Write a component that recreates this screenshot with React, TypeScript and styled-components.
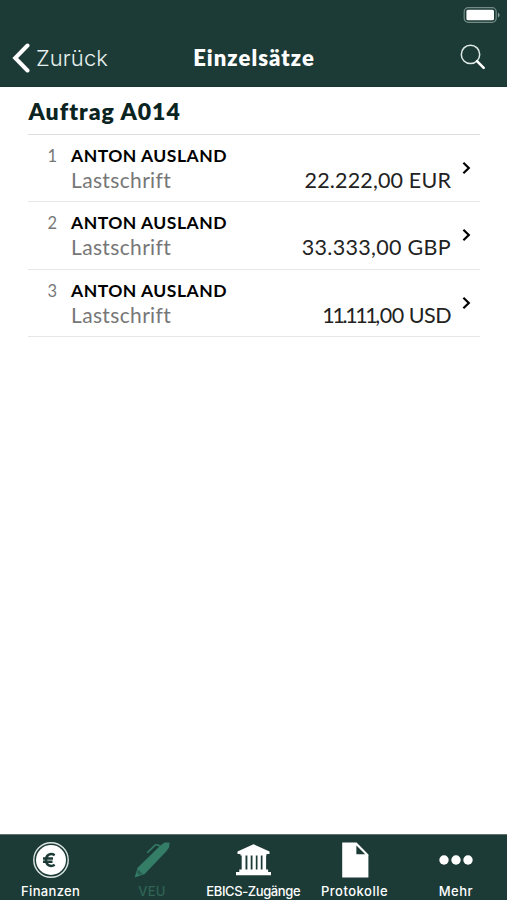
import React from "react";
import styled, { createGlobalStyle } from "styled-components";

const GlobalStyle = createGlobalStyle`
  * { box-sizing: border-box; }
  html, body { margin: 0; padding: 0; background: #fff; }
`;

const Screen = styled.div`
  width: 507px;
  height: 900px;
  display: flex;
  flex-direction: column;
  overflow: hidden;
  background: #fff;
  font-family: Lato, sans-serif;
`;

const Header = styled.header`
  height: 87px;
  flex: none;
  background: #1c3b37;
  border-bottom: 1px solid #173631;
  color: #fff;
`;

const StatusBar = styled.div`
  height: 29px;
  display: flex;
  justify-content: flex-end;
  padding: 7px 6px 0 0;
`;

const NavBar = styled.div`
  height: 57px;
  display: grid;
  grid-template-columns: 180px 1fr 180px;
  align-items: center;
`;

const BackButton = styled.button`
  display: flex;
  align-items: center;
  gap: 6px;
  height: 57px;
  padding: 0 0 0 12px;
  border: 0;
  background: none;
  color: #e6efed;
  font: 300 22px/30px Inter, sans-serif;
  letter-spacing: 0.1px;
`;

const NavTitle = styled.h1`
  margin: 0 -1px 0 0;
  text-align: center;
  font-size: 22px;
  line-height: 30px;
  font-weight: 800;
  letter-spacing: 1.05px;
  white-space: nowrap;
`;

const SearchButton = styled.button`
  justify-self: end;
  display: flex;
  margin: 0 21px 2px 0;
  padding: 0;
  border: 0;
  background: none;
`;

const Content = styled.main`
  flex: 1;
  padding: 0 27px 0 28px;
`;

const OrderTitle = styled.h2`
  margin: 0;
  height: 48px;
  padding-left: 0.5px;
  border-bottom: 1px solid #dedede;
  color: #0b241f;
  font-size: 23px;
  line-height: 48px;
  font-weight: 800;
  letter-spacing: 1px;
`;

const List = styled.ul`
  list-style: none;
  margin: 0;
  padding: 0;
`;

const Row = styled.li`
  height: 67.3px;
  display: grid;
  grid-template-columns: 29px 1fr 9px;
  column-gap: 14px;
  padding-right: 9px;
  border-bottom: 1px solid #e7e7e7;
`;

const Index = styled.span`
  padding-top: 9px;
  text-align: right;
  color: #777;
  font-size: 16.5px;
  line-height: 25px;
`;

const Details = styled.div`
  display: flex;
  flex-direction: column;
  padding-top: 9px;
`;

const Name = styled.div`
  color: #000;
  font-size: 17.5px;
  line-height: 24px;
  font-weight: 700;
  letter-spacing: 0.5px;
`;

const Line = styled.div`
  display: flex;
  align-items: baseline;
  justify-content: space-between;
  margin-right: -3px;
  line-height: 23px;
`;

const Kind = styled.span`
  color: #777;
  font-size: 21px;
  letter-spacing: 0.35px;
`;

const Amount = styled.span<{ $tracking: number }>`
  color: #222;
  font-size: 21.5px;
  letter-spacing: ${(p) => p.$tracking}px;
`;

const Thousands = styled.span<{ $narrow?: boolean }>`
  letter-spacing: ${(p) => (p.$narrow ? "-2.4px" : "inherit")};
`;

const Chevron = styled.svg`
  margin-top: 26px;
`;

const TabBar = styled.nav`
  height: 66px;
  flex: none;
  display: grid;
  grid-template-columns: repeat(5, 101.3px);
  background: #1c3b37;
  border-top: 1px solid #62736f;
`;

const Tab = styled.a<{ $active?: boolean }>`
  display: flex;
  flex-direction: column;
  align-items: center;
  padding-top: 7px;
  color: ${(p) => (p.$active ? "#306454" : "#fff")};
`;

const TabLabel = styled.span<{ $tracking: number }>`
  margin-top: 4px;
  font: 500 13px/18px Inter, sans-serif;
  letter-spacing: ${(p) => p.$tracking}px;
  white-space: nowrap;
`;

const Battery = () => (
  <svg width="38" height="17" viewBox="0 0 38 17">
    <rect x="1.2" y="0.7" width="32" height="14.6" rx="4" fill="none" stroke="#758b85" strokeWidth="1.2" />
    <rect x="3.4" y="2.8" width="27.6" height="10.4" rx="1.5" fill="#fff" />
    <path d="M35 5.5 Q38.2 8 35 10.5Z" fill="#8fa29d" />
  </svg>
);

const BackIcon = () => (
  <svg width="18" height="30" viewBox="0 0 18 30">
    <path d="M15.5 2.5 L3.2 15 L15.5 27.5" fill="none" stroke="#fff" strokeWidth="4" strokeLinecap="round" strokeLinejoin="miter" />
  </svg>
);

const SearchIcon = () => (
  <svg width="26" height="26" viewBox="0 0 26 26">
    <circle cx="10.5" cy="10.4" r="9.2" fill="none" stroke="#dfe9e5" strokeWidth="1.5" />
    <path d="M17 17.1 L23.7 23.8" stroke="#fff" strokeWidth="2.6" strokeLinecap="round" />
  </svg>
);

const EuroIcon = () => (
  <svg width="36" height="36" viewBox="0 0 36 36">
    <circle cx="18" cy="18" r="17.2" fill="none" stroke="#dce7e3" strokeWidth="1.4" />
    <circle cx="18" cy="18" r="15" fill="#fff" />
    <path d="M21.7 13.2 C17.8 10.7 13 12.6 13 18 C13 23.4 17.8 25.3 21.7 22.8 M10 16.4 H20 M10 19.8 H19.5" fill="none" stroke="#1c3b37" strokeWidth="2.5" />
  </svg>
);

const PenIcon = () => (
  <svg width="36" height="36" viewBox="0 0 36 36">
    <path d="M26.5 3.4 L30.5 0.6 L35.6 0.4 L35 5.6 L32.4 9.2 L10.6 32 L0.6 35.6 L3.6 25.8 Z" fill="#347d66" />
    <path d="M13.2 10.8 L20.6 3.6 Q22 2.4 23.6 3 L27 4.4" fill="none" stroke="#347d66" strokeWidth="1.5" />
    <path d="M3.8 27.2 L8.8 31.8 L5.2 33 L2.8 31 Z" fill="#1c3b37" fillOpacity="0.45" />
  </svg>
);

const BankIcon = () => (
  <svg width="36" height="36" viewBox="-0.5 0 36 36">
    <path d="M18 2.2 L34 9.6 V12 H31 V13.4 H5 V12 H2 V9.6Z M6.2 13 H10 V28 H6.2Z M11.9 13 H15.2 V28 H11.9Z M17 13 H20.3 V28 H17Z M22 13 H25.3 V28 H22Z M27 13 H30.6 V28 H27Z M3.8 27.5 H32.6 V30 H35.5 V33.2 H0.5 V30 H3.8Z" fill="#fff" />
  </svg>
);

const FileIcon = () => (
  <svg width="36" height="36" viewBox="0 0 36 36">
    <path d="M5.2 0.6 H18 V13 H31.4 V35.6 H5.2Z" fill="#fff" />
    <path d="M18 0.6 H19.6 L31.4 12.4 V13.6 H18Z" fill="#fff" />
    <path d="M19.4 3.4 L28.2 12.2 H19.4Z" fill="#1c3b37" />
  </svg>
);

const DotsIcon = () => (
  <svg width="36" height="36" viewBox="0 0 36 36">
    <circle cx="6" cy="18" r="4.7" fill="#fff" />
    <circle cx="18" cy="18" r="4.7" fill="#fff" />
    <circle cx="30" cy="18" r="4.7" fill="#fff" />
  </svg>
);

const entries = [
  { thousands: "22.222", rest: ",00 EUR", tracking: 0.15 },
  { thousands: "33.333", rest: ",00 GBP", tracking: 0.3 },
  { thousands: "11.111", rest: ",00 USD", tracking: -0.5, narrow: true },
];

const tabs = [
  { label: "Finanzen", icon: <EuroIcon />, tracking: 0.35 },
  { label: "VEU", icon: <PenIcon />, tracking: 0.2, active: true },
  { label: "EBICS-Zugänge", icon: <BankIcon />, tracking: -0.4 },
  { label: "Protokolle", icon: <FileIcon />, tracking: 0.5 },
  { label: "Mehr", icon: <DotsIcon />, tracking: 0.4 },
];

export default function App() {
  return (
    <>
      <GlobalStyle />
      <Screen>
        <Header>
          <StatusBar>
            <Battery />
          </StatusBar>
          <NavBar>
            <BackButton>
              <BackIcon />
              Zurück
            </BackButton>
            <NavTitle>Einzelsätze</NavTitle>
            <SearchButton aria-label="Suchen">
              <SearchIcon />
            </SearchButton>
          </NavBar>
        </Header>
        <Content>
          <OrderTitle>Auftrag A014</OrderTitle>
          <List>
            {entries.map((entry, i) => (
              <Row key={entry.thousands}>
                <Index>{i + 1}</Index>
                <Details>
                  <Name>ANTON AUSLAND</Name>
                  <Line>
                    <Kind>Lastschrift</Kind>
                    <Amount $tracking={entry.tracking}>
                      <Thousands $narrow={entry.narrow}>{entry.thousands}</Thousands>
                      {entry.rest}
                    </Amount>
                  </Line>
                </Details>
                <Chevron width="9" height="14" viewBox="0 0 9 14">
                  <path d="M1.4 1.8 L6.8 7 L1.4 12.2" fill="none" stroke="#000" strokeWidth="2.2" />
                </Chevron>
              </Row>
            ))}
          </List>
        </Content>
        <TabBar>
          {tabs.map((tab) => (
            <Tab key={tab.label} $active={tab.active}>
              {tab.icon}
              <TabLabel $tracking={tab.tracking}>{tab.label}</TabLabel>
            </Tab>
          ))}
        </TabBar>
      </Screen>
    </>
  );
}
